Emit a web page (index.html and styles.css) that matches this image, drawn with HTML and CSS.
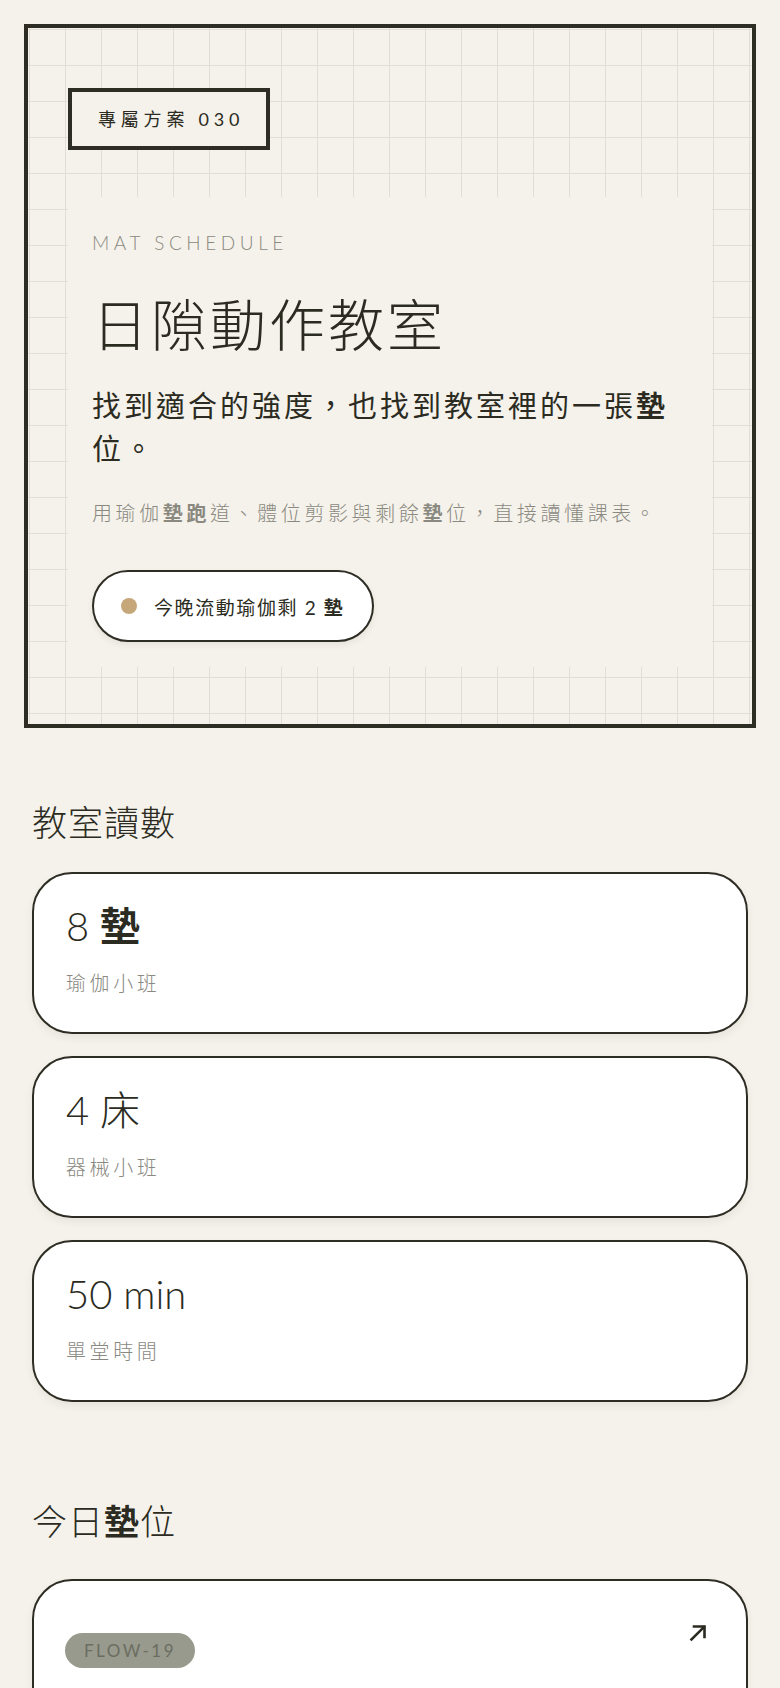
FILE: index.html
```html
<!DOCTYPE html>
<html lang="zh-Hant">
<head>
<meta charset="utf-8">
<meta name="viewport" content="width=device-width, initial-scale=1.0">
<title>日隙動作教室</title>
<link rel="stylesheet" href="styles.css">
</head>
<body>

<header class="hero">
  <div class="tag">專屬方案 030</div>
  <div class="panel">
    <p class="eyebrow">MAT SCHEDULE</p>
    <h1 class="title">日隙動作教室</h1>
    <p class="lead">找到適合的強度，也找到教室裡的一張<b>墊</b>位。</p>
    <p class="desc">用瑜伽<b>墊跑</b>道、體位剪影與剩餘<b>墊</b>位，直接讀懂課表。</p>
    <div class="pill"><span class="dot"></span><span>今晚流動瑜伽剩 2 <b>墊</b></span></div>
  </div>
</header>

<section class="block">
  <h2 class="block-title">教室讀數</h2>
  <div class="stats">
    <div class="stat">
      <div class="stat-num">8 <b>墊</b></div>
      <div class="stat-label">瑜伽小班</div>
    </div>
    <div class="stat">
      <div class="stat-num">4 床</div>
      <div class="stat-label">器械小班</div>
    </div>
    <div class="stat">
      <div class="stat-num">50 min</div>
      <div class="stat-label">單堂時間</div>
    </div>
  </div>
</section>

<section class="block block-mats">
  <h2 class="block-title">今日<b>墊</b>位</h2>
  <div class="mat-card">
    <div class="mat-top">
      <span class="badge">FLOW-19</span>
      <svg class="arrow" width="20" height="20" viewBox="0 0 20 20" fill="none" stroke="#2b2b22" stroke-width="2.6" stroke-linecap="square">
        <path d="M3.5 16.5 L16 4"/>
        <path d="M6 3.5 H16.5 V14"/>
      </svg>
    </div>
  </div>
</section>

</body>
</html>
```

FILE: styles.css
```css
body {
  margin: 0;
  padding: 24px 24px 0;
  background: #f5f2eb;
  color: #2b2b22;
  font-family: Lato, "Noto Sans CJK JP", "Noto Sans CJK TC", sans-serif;
  font-weight: 300;
}

b {
  font-weight: 700;
}

p {
  margin: 0;
}

/* hero with the grid paper */
.hero {
  border: 4px solid #2e2d24;
  padding: 60px 40px 57px;
  background-color: #f5f2eb;
  background-image:
    linear-gradient(to right, #e3ded4 1px, transparent 1px),
    linear-gradient(to bottom, #e3ded4 1px, transparent 1px);
  background-size: 36px 36px;
  background-position: 1px 1px;
}

.tag {
  display: inline-block;
  border: 4px solid #2e2d24;
  padding: 14px 22px 14px 26px;
  font-size: 18px;
  line-height: 26px;
  font-weight: 400;
  letter-spacing: 4.8px;
  background: #f5f2eb;
}

.panel {
  margin-top: 47px;
  padding: 32px 24px 25px;
  background: #f5f2eb;
}

.eyebrow {
  font-size: 19px;
  line-height: 28px;
  letter-spacing: 0.24em;
  color: #8a897f;
}

.title {
  margin: 32px 0 0;
  font-size: 56px;
  line-height: 72px;
  font-weight: 300;
  letter-spacing: 3px;
}

.lead {
  margin-top: 23px;
  font-size: 29px;
  line-height: 43px;
  letter-spacing: 3px;
  font-weight: 400;
}

.desc {
  margin-top: 28px;
  font-size: 20px;
  line-height: 30px;
  letter-spacing: 3.6px;
  color: #8a897f;
}

.pill {
  display: inline-flex;
  align-items: center;
  gap: 17px;
  margin-top: 42px;
  padding: 0 28px 0 27px;
  height: 72px;
  box-sizing: border-box;
  border: 2px solid #2e2d24;
  border-radius: 40px;
  background: #fff;
  font-size: 19px;
  font-weight: 400;
  letter-spacing: 1.6px;
  box-shadow: 0 3px 6px rgba(60, 55, 40, 0.08);
}

.dot {
  width: 16px;
  height: 16px;
  border-radius: 50%;
  background: #c5a77a;
}

/* sections */
.block {
  padding: 0 8px;
  margin-top: 70px;
}

.block-mats {
  margin-top: 95px;
}

.block-title {
  margin: 0 0 26px;
  font-size: 35px;
  line-height: 48px;
  font-weight: 300;
  letter-spacing: 1px;
}

.block-mats .block-title {
  margin-bottom: 34px;
}

.stats {
  display: flex;
  flex-direction: column;
  gap: 22px;
}

.stat {
  background: #fff;
  border: 2px solid #2e2d24;
  border-radius: 40px;
  padding: 26px 32px 32px;
  height: 162px;
  box-sizing: border-box;
  box-shadow: 0 4px 8px rgba(60, 55, 40, 0.07);
}

.stat-num {
  font-size: 40px;
  line-height: 52px;
}

.stat-label {
  margin-top: 16px;
  font-size: 20px;
  line-height: 30px;
  letter-spacing: 3.6px;
  color: #8a897f;
}

.mat-card {
  background: #fff;
  border: 2px solid #2e2d24;
  border-radius: 40px;
  padding: 42px 38px 40px 31px;
  height: 200px;
  box-shadow: 0 4px 8px rgba(60, 55, 40, 0.07);
}

.mat-top {
  display: flex;
  justify-content: space-between;
  align-items: flex-start;
}

.badge {
  margin-top: 10px;
  display: inline-block;
  padding: 0 19px;
  height: 35px;
  line-height: 35px;
  border-radius: 18px;
  background: #989a8d;
  color: #6a6d61;
  font-size: 17px;
  font-weight: 400;
  letter-spacing: 2.5px;
}

.arrow {
  display: block;
}
```
